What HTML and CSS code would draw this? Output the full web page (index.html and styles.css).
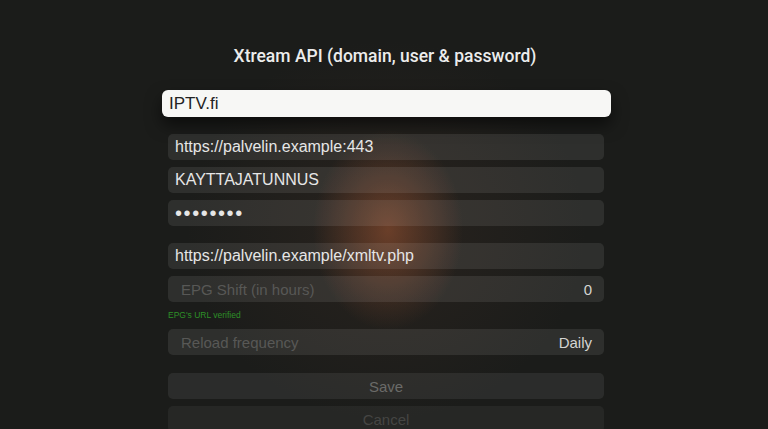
FILE: index.html
```html
<!DOCTYPE html>
<html lang="en">
<head>
<meta charset="utf-8">
<title>Xtream API</title>
<link rel="stylesheet" href="styles.css">
</head>
<body>
<div class="screen">
  <h1 class="title">Xtream API (domain, user &amp; password)</h1>
  <form class="form">
    <div class="field field-focused">IPTV.fi</div>
    <div class="group">
      <div class="field">https://palvelin.example:443</div>
      <div class="field">KAYTTAJATUNNUS</div>
      <div class="field field-secret">••••••••</div>
    </div>
    <div class="group group-epg">
      <div class="field">https://palvelin.example/xmltv.php</div>
      <div class="field row">
        <span class="label">EPG Shift (in hours)</span>
        <span class="value">0</span>
      </div>
      <div class="note">EPG's URL verified</div>
      <div class="field row">
        <span class="label">Reload frequency</span>
        <span class="value">Daily</span>
      </div>
    </div>
    <div class="group group-actions">
      <div class="field button">Save</div>
      <div class="field button button-dim">Cancel</div>
    </div>
  </form>
</div>
</body>
</html>
```

FILE: styles.css
```css
html, body {
  margin: 0;
  padding: 0;
  height: 100%;
}

body {
  width: 768px;
  height: 429px;
  overflow: hidden;
  background-color: #1b1c1a;
  background-image:
    radial-gradient(ellipse 75px 100px at 388px 230px, rgba(160, 85, 50, 0.55), rgba(160, 85, 50, 0) 100%),
    radial-gradient(ellipse 200px 190px at 386px 230px, rgba(90, 60, 45, 0.22), rgba(90, 60, 45, 0) 100%);
  font-family: "Liberation Sans", Arial, sans-serif;
  color: #e6e6e6;
}

.screen {
  display: flex;
  flex-direction: column;
  padding-top: 45px;
}

.title {
  margin: 0;
  text-align: center;
  font-family: Roboto, "Liberation Sans", sans-serif;
  font-weight: 500;
  font-size: 17.5px;
  line-height: 22px;
  color: #ececec;
  padding-left: 2px;
}

.form {
  width: 436px;
  margin: 23px 0 0 168px;
  display: flex;
  flex-direction: column;
}

.group {
  display: flex;
  flex-direction: column;
  gap: 7px;
  margin-top: 17px;
}

.group-epg {
  margin-top: 17px;
}

.group-actions {
  margin-top: 18px;
}

.field {
  height: 26px;
  box-sizing: border-box;
  padding: 0 7px;
  display: flex;
  align-items: center;
  border-radius: 5px;
  background: rgba(255, 255, 255, 0.085);
  font-size: 16px;
  color: #e6e6e6;
  white-space: nowrap;
}

.field-focused {
  height: 27px;
  width: 449px;
  margin-left: -6px;
  padding: 0 7px;
  background: #f7f7f5;
  color: #232323;
  font-size: 17px;
  border-radius: 6px;
  box-shadow: 0 8px 16px rgba(0, 0, 0, 0.55);
}

.field-secret {
  letter-spacing: 1.6px;
  font-size: 20px;
  padding-left: 7px;
}

.row {
  justify-content: space-between;
  padding: 0 12px 0 13px;
  font-size: 15px;
}

.label {
  color: #585856;
}

.value {
  color: #d4d4d2;
}

.note {
  height: 13px;
  margin: 0;
  font-size: 8.5px;
  line-height: 13px;
  color: #2d9028;
}

.button {
  justify-content: center;
  font-size: 15px;
  color: #6a6a68;
  background: rgba(255, 255, 255, 0.075);
}

.button-dim {
  color: #454543;
  background: rgba(255, 255, 255, 0.05);
}
```
